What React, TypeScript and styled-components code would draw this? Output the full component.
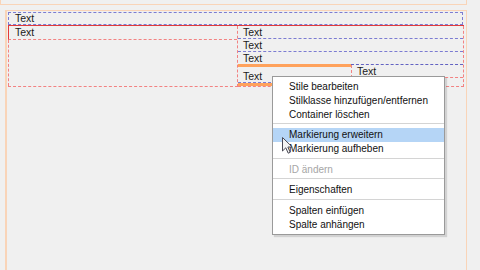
import styled, { createGlobalStyle } from 'styled-components';

const GlobalStyle = createGlobalStyle`
    body {
        margin: 0;
        background: #f0f0f0;
        font-family: "Liberation Sans", Arial, sans-serif;
        overflow: hidden;
    }
`;

const peach = '#f9d4b8';
const pink = '#f28282';
const blue = '#7c7cd2';
const orange = '#ffa25c';

const Page = styled.div`
    position: relative;
    width: 480px;
    height: 270px;
    overflow: hidden;
`;

const PrevBox = styled.div`
    box-sizing: border-box;
    width: 467px;
    height: 5px;
    border: 1px solid ${peach};
    border-top: none;
`;

const Section = styled.div`
    box-sizing: border-box;
    width: 462px;
    height: 265px;
    margin: 5px 0 0 5px;
    padding: 1px 2px 0 1px;
    border: 1px solid ${peach};
    border-left: 2px solid ${peach};
    border-bottom: none;
`;

const Label = styled.span`
    font-size: 10.5px;
    line-height: 11px;
    color: #1b1b1b;
    white-space: nowrap;
`;

const TopPara = styled.div`
    box-sizing: border-box;
    height: 13px;
    margin-right: 1px;
    padding-left: 6px;
    border: 1px dashed ${blue};
    display: flex;
    align-items: center;
`;

const Table = styled.div`
    display: flex;
    height: 62px;
    box-sizing: border-box;
    border-top: 1px solid #e23a3a;
`;

const LeftCell = styled.div`
    width: 229px;
    display: flex;
    flex-direction: column;
    border-right: 1px dashed ${pink};
    border-bottom: 1px dashed ${pink};
`;

const LeftPara = styled.div`
    box-sizing: border-box;
    height: 14px;
    padding-left: 6px;
    display: flex;
    align-items: center;
    border-left: 1px solid #e23a3a;
    border-bottom: 1px dashed ${pink};
`;

const Filler = styled.div`
    flex: 1;
    border-left: 1px dashed ${pink};
`;

const RightCol = styled.div`
    flex: 1;
    display: flex;
    flex-direction: column;
    border-right: 1px dashed ${pink};
    border-bottom: 1px dashed ${pink};
`;

const Row = styled.div<{ $h: number; $line?: boolean }>`
    box-sizing: border-box;
    height: ${p => p.$h}px;
    padding-left: 5px;
    display: flex;
    align-items: center;
    border-bottom: ${p => (p.$line ? `1px dashed ${blue}` : 'none')};
`;

const SplitRow = styled.div`
    flex: 1;
    display: flex;
`;

const DropPart = styled.div`
    box-sizing: border-box;
    width: 113px;
    display: flex;
    flex-direction: column;
    border-top: 3px solid ${orange};
    border-bottom: 3px solid ${orange};
`;

const DropText = styled.div`
    flex: 1;
    padding: 3px 0 0 5px;
    display: flex;
    align-items: center;
    border-bottom: 1px dashed ${blue};
`;

const SidePart = styled.div`
    flex: 1;
    border-top: 1px dashed #6262c2;
`;

const SideBox = styled.div`
    box-sizing: border-box;
    height: 13px;
    padding-left: 5px;
    display: flex;
    align-items: center;
    border: 1px dashed ${pink};
    border-top: none;
    border-right: none;
`;

const Menu = styled.div`
    position: absolute;
    left: 272px;
    top: 76px;
    width: 173px;
    box-sizing: border-box;
    padding: 2px 0 3px;
    background: #fff;
    border: 1px solid #9a9a9a;
    box-shadow: 2px 2px 1px rgba(0, 0, 0, 0.12);
`;

const Item = styled.div<{ $active?: boolean; $disabled?: boolean }>`
    height: 14px;
    padding-left: 16px;
    display: flex;
    align-items: center;
    font-size: 10px;
    color: ${p => (p.$disabled ? '#a6a6a6' : '#111')};
    background: ${p => (p.$active ? '#b5d5f6' : 'transparent')};
    white-space: nowrap;
`;

const Separator = styled.div`
    height: 6.5px;
    display: flex;
    align-items: center;

    &::after {
        content: '';
        flex: 1;
        border-top: 1px solid #d4d4d4;
        border-bottom: 1px solid #fff;
    }
`;

const Cursor = styled.svg`
    position: absolute;
    left: 282px;
    top: 137px;
`;

const App = () => (
    <Page>
        <GlobalStyle />
        <PrevBox />
        <Section>
            <TopPara>
                <Label>Text</Label>
            </TopPara>
            <Table>
                <LeftCell>
                    <LeftPara>
                        <Label>Text</Label>
                    </LeftPara>
                    <Filler />
                </LeftCell>
                <RightCol>
                    <Row $h={13} $line>
                        <Label>Text</Label>
                    </Row>
                    <Row $h={13} $line>
                        <Label>Text</Label>
                    </Row>
                    <Row $h={12}>
                        <Label>Text</Label>
                    </Row>
                    <SplitRow>
                        <DropPart>
                            <DropText>
                                <Label>Text</Label>
                            </DropText>
                        </DropPart>
                        <SidePart>
                            <SideBox>
                                <Label>Text</Label>
                            </SideBox>
                        </SidePart>
                    </SplitRow>
                </RightCol>
            </Table>
        </Section>

        <Menu>
            <Item>Stile bearbeiten</Item>
            <Item>Stilklasse hinzufügen/entfernen</Item>
            <Item>Container löschen</Item>
            <Separator />
            <Item $active>Markierung erweitern</Item>
            <Item>Markierung aufheben</Item>
            <Separator />
            <Item $disabled>ID ändern</Item>
            <Separator />
            <Item>Eigenschaften</Item>
            <Separator />
            <Item>Spalten einfügen</Item>
            <Item>Spalte anhängen</Item>
        </Menu>

        <Cursor width="12" height="18" viewBox="0 0 12 18">
            <path d="M0.5 0.5 L0.5 14 L3.8 10.8 L6.2 16.2 L8.2 15.3 L5.9 10 L10.2 10 Z" fill="#f4f4f4" stroke="#4a4a55" strokeWidth="1" />
        </Cursor>
    </Page>
);

export default App;
